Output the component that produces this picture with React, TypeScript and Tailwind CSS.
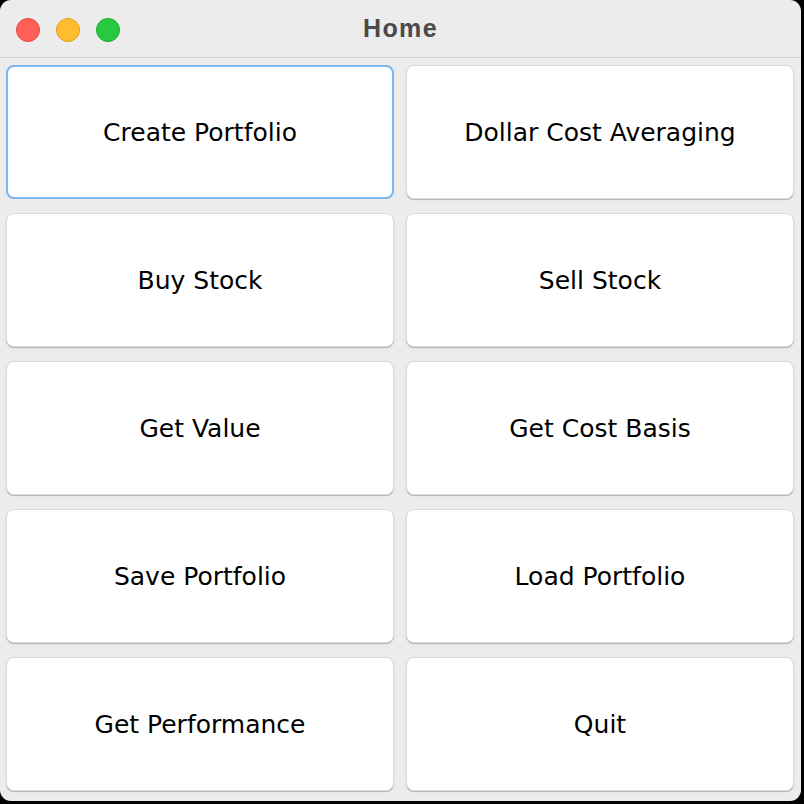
import React from "react";

const labels = [
  "Create Portfolio",
  "Dollar Cost Averaging",
  "Buy Stock",
  "Sell Stock",
  "Get Value",
  "Get Cost Basis",
  "Save Portfolio",
  "Load Portfolio",
  "Get Performance",
  "Quit",
];

export default function App() {
  return (
    <div className="w-[804px] h-[804px] bg-black">
      <div className="w-[801px] h-[801px] rounded-[11px] bg-[#ececec] overflow-hidden flex flex-col">
        <div className="relative h-[58px] border-b border-[#d0d0d0] flex items-center justify-center shrink-0">
          <div className="absolute left-[16px] top-[18px] flex gap-[16px]">
            <div className="w-[24px] h-[24px] rounded-full bg-[#ff5f57] border border-[#e2463f]" />
            <div className="w-[24px] h-[24px] rounded-full bg-[#febc2e] border border-[#e1a116]" />
            <div className="w-[24px] h-[24px] rounded-full bg-[#28c840] border border-[#1aab29]" />
          </div>
          <span className="text-[25px] font-bold text-[#4a4a4a] tracking-[1.4px] font-['Liberation_Sans',Arial,sans-serif]">
            Home
          </span>
        </div>
        <div className="grid grid-cols-2 gap-x-[12px] gap-y-[14px] pl-[6px] pr-[7px] pt-[7px] auto-rows-[134px]">
          {labels.map((l, i) => (
            <div
              key={l}
              className={
                "flex items-center justify-center bg-white rounded-[8px] text-black font-['DejaVu_Sans',sans-serif] " +
                (i === 0
                  ? "border-2 border-[#7ab8ef]"
                  : "border border-[#dcdcdc] shadow-[0_1px_1px_rgba(0,0,0,0.25)]")
              }
            >
              <span className="text-[25px] pt-[2px]">{l}</span>
            </div>
          ))}
        </div>
      </div>
    </div>
  );
}
